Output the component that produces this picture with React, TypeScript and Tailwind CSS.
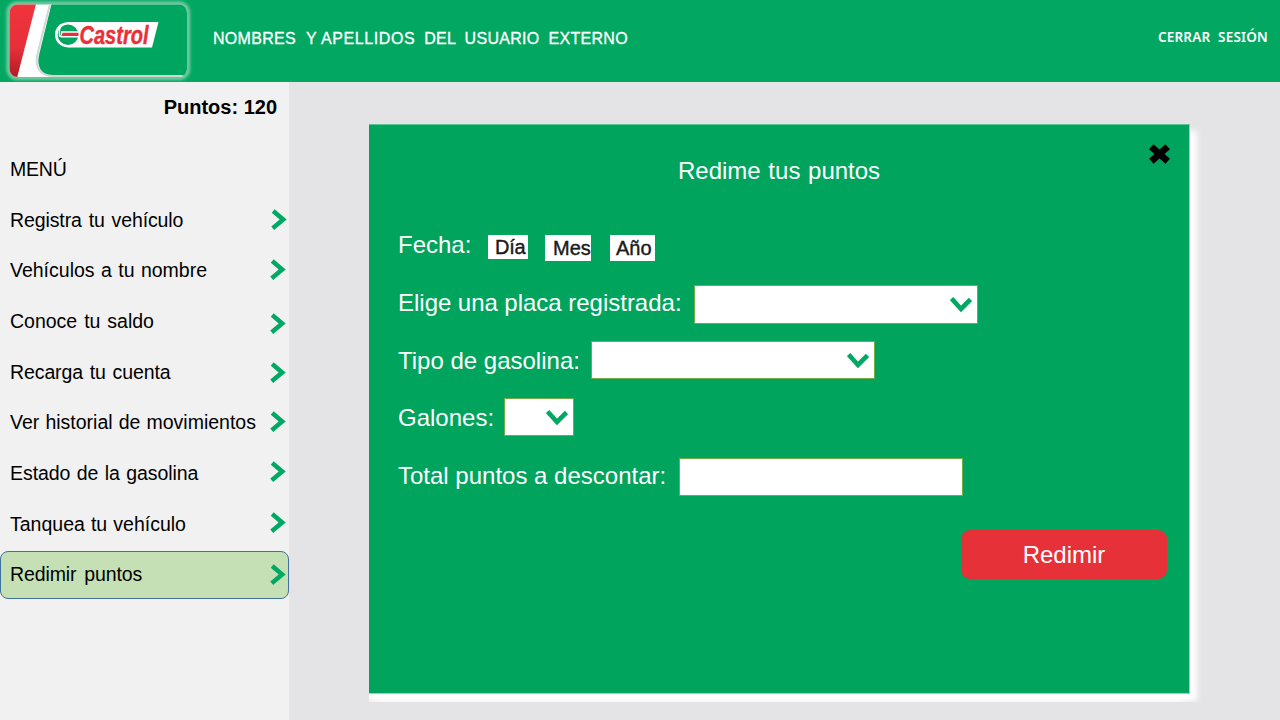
import React from "react";

type MenuItem = { label: string; spacing: string; arrow: string; active?: boolean };

const menu: MenuItem[] = [
  { label: "Registra tu vehículo", spacing: "[word-spacing:1.5px] tracking-[-0.1px]", arrow: "mt-[14px] mr-[2px]" },
  { label: "Vehículos a tu nombre", spacing: "[word-spacing:1px] -mt-px", arrow: "mt-[13px] mr-[3px]" },
  { label: "Conoce tu saldo", spacing: "[word-spacing:1.5px]", arrow: "mt-[17px] mr-[3px]" },
  { label: "Recarga tu cuenta", spacing: "[word-spacing:1.4px] tracking-[-0.1px]", arrow: "mt-[15px] mr-[3px]" },
  { label: "Ver historial de movimientos", spacing: "[word-spacing:0.7px]", arrow: "mt-[14px] mr-[3px]" },
  { label: "Estado de la gasolina", spacing: "[word-spacing:1px] tracking-[-0.05px]", arrow: "mt-[13px] mr-[3px]" },
  { label: "Tanquea tu vehículo", spacing: "[word-spacing:0.7px]", arrow: "mt-[13px] mr-[3px]" },
  { label: "Redimir puntos", spacing: "[word-spacing:2.500px] tracking-[-0.1px]", arrow: "", active: true },
];

function Logo() {
  return (
    <svg width="200" height="82" viewBox="0 0 200 82" className="block shrink-0">
      <defs>
        <linearGradient id="red" x1="0" y1="0" x2="0" y2="1">
          <stop offset="0" stopColor="#f0343c" />
          <stop offset="0.6" stopColor="#e6303a" />
          <stop offset="1" stopColor="#b01a22" />
        </linearGradient>
        <clipPath id="card">
          <rect x="9.500" y="4.500" width="177.500" height="72.500" rx="8" />
        </clipPath>
        <filter id="glow" x="-10%" y="-20%" width="120%" height="140%">
          <feGaussianBlur stdDeviation="1.8" />
        </filter>
      </defs>
      <rect x="8.500" y="3.500" width="179.500" height="74.500" rx="9" fill="none" stroke="#b4dcc8" strokeWidth="4" opacity="0.7" filter="url(#glow)" />
      <g clipPath="url(#card)">
        <rect x="9" y="4" width="179" height="74" fill="#fff" />
        <path d="M9 4H36L17 78H9Z" fill="url(#red)" />
        <path d="M51.500 4L39 55C36.500 66 41 75.500 53 75.500H188V4Z" fill="#00a65f" />
        <path d="M50 4L37.500 54C34.500 67 40 76 53 76H182" fill="none" stroke="#d3d6d5" strokeWidth="2" />
      </g>
      <path d="M67.500 22H158.500L152 47.500H67.500Z" fill="#fff" />
      <circle cx="67.500" cy="34.700" r="12.500" fill="#fff" />
      <circle cx="68" cy="34.700" r="10.300" fill="#00a65f" />
      <path d="M61.500 25.500Q58.500 30 59.500 36H65" fill="none" stroke="#fff" strokeWidth="1.300" />
      <path d="M61 31.300H79V37.500H60.500Z" fill="#fff" />
      <path d="M62.500 32.700H78.500V36H61.500Z" fill="#e6303a" />
      <text x="79.500" y="43.500" fontSize="25" fontWeight="700" fontStyle="italic" textLength="69" lengthAdjust="spacingAndGlyphs" fill="#ea2f39" stroke="#ea2f39" strokeWidth="0.400" className="font-['Liberation_Sans_Narrow','Liberation_Sans',sans-serif]">
        Castrol
      </text>
    </svg>
  );
}

function ArrowRight({ className }: { className: string }) {
  return (
    <svg width="16" height="21" viewBox="0 0 16 21" className={`block shrink-0 ${className}`}>
      <path d="M2.200 2L12.200 10.500L1.700 19.200" fill="none" stroke="#00a963" strokeWidth="4.500" />
    </svg>
  );
}

function Field({ className, arrow }: { className: string; arrow?: boolean }) {
  return (
    <div className={`flex justify-end border border-[#70ad47] bg-white ${className}`}>
      {arrow && (
        <svg width="22" height="16" viewBox="0 0 22 16" className="mt-[11px] mr-[5px] block">
          <path d="M1.600 1.500L11 12L20.500 2.500" fill="none" stroke="#00a963" strokeWidth="4.600" />
        </svg>
      )}
    </div>
  );
}

export default function App() {
  return (
    <div className="flex h-[720px] w-[1280px] flex-col overflow-hidden bg-[#e4e4e6] font-['Liberation_Sans',Arial,sans-serif]">
      <header className="flex h-[82px] shrink-0 bg-[#02a861] text-white">
        <Logo />
        <h1 className="mt-[29px] ml-[13px] flex-1 text-[16px] leading-[20px] tracking-[0.3px] whitespace-nowrap [word-spacing:4.2px] [-webkit-text-stroke:0.3px_#ffffff]">
          NOMBRES <span className="mr-[-5px] ml-px">Y</span> <span className="tracking-[0.6px]">APELLIDOS</span> DEL USUARIO EXTERNO
        </h1>
        <a className="mt-[27px] mr-[12px] font-['Noto_Sans',sans-serif] text-[13.5px] leading-[20px] font-semibold tracking-[0.2px] whitespace-nowrap [word-spacing:4px]">
          CERRAR SESIÓN
        </a>
      </header>

      <div className="flex min-h-0 flex-1">
        <aside className="flex w-[289px] shrink-0 flex-col bg-[#f1f1f1] text-[19.5px] text-black">
          <p className="mt-[13px] mr-[12px] text-right text-[20px] leading-[24px] font-bold">Puntos: 120</p>
          <h2 className="mt-[38px] ml-[10px] leading-[24px] tracking-[-0.2px]">MENÚ</h2>
          <nav className="mt-[14px] flex flex-col">
            {menu.map((m) => (
              <div
                key={m.label}
                className={
                  m.active
                    ? "mt-[2px] flex h-[48px] items-start justify-between rounded-[8px] border border-[#41719c] bg-[#c5e0b4]"
                    : "flex h-[50.6px] items-start justify-between"
                }
              >
                <span className={`leading-[24px] whitespace-nowrap ${m.active ? "mt-[10px] ml-[9px]" : "mt-[13px] ml-[10px]"}`}>
                  <span className={`block ${m.spacing}`}>{m.label}</span>
                </span>
                <ArrowRight className={m.active ? "mt-[12px] mr-[2px]" : m.arrow} />
              </div>
            ))}
          </nav>
        </aside>

        <main className="flex-1 pt-[42px] pl-[80px]">
          <section className="flex h-[570px] w-[821px] flex-col border-t border-r border-b border-t-[#5cc596] border-r-[#8fd8b6] border-b-[#8fd8b6] bg-[#00a45d] text-[24px] leading-[38px] text-white shadow-[7px_7px_6px_0px_#ffffff,-6px_7px_6px_0px_#ffffff] [clip-path:inset(0_-20px_-8px_0)]">
            <div className="flex h-[101px] shrink-0">
              <h2 className="mt-[27px] ml-[309px] flex-1 whitespace-nowrap [word-spacing:1px]">Redime tus puntos</h2>
              <button className="mt-[18px] mr-[17px] h-[22px] w-[24px]" aria-label="Cerrar">
                <svg width="24" height="22" viewBox="0 0 24 22">
                  <path d="M3.300 3.700L19.700 18.300M19.700 3.700L3.300 18.300" fill="none" stroke="#000" strokeWidth="6.800" />
                </svg>
              </button>
            </div>

            <div className="flex h-[58px] items-start pl-[29px] whitespace-nowrap">
              <span className="w-[90px]">Fecha:</span>
              <div className="mt-[9px] h-[24px] w-[40px] overflow-hidden bg-white pl-[7px] text-[20px] leading-[25px] tracking-[-0.300px] text-[#1a1a1a] [-webkit-text-stroke:0.400px_#1a1a1a]">Día</div>
              <div className="mt-[9px] ml-[17px] h-[26px] w-[46px] overflow-hidden bg-white pl-[8px] text-[20px] leading-[27px] text-[#1a1a1a] [-webkit-text-stroke:0.400px_#1a1a1a]">Mes</div>
              <div className="mt-[9px] ml-[19px] h-[26px] w-[45px] overflow-hidden bg-white pl-[6px] text-[20px] leading-[27px] text-[#1a1a1a] [-webkit-text-stroke:0.400px_#1a1a1a]">Año</div>
            </div>
            <div className="flex h-[58px] items-start pl-[29px] whitespace-nowrap">
              <span className="w-[296px] [word-spacing:-0.200px]">Elige una placa registrada:</span>
              <Field className="mt-px h-[39px] w-[284px]" arrow />
            </div>
            <div className="flex h-[57px] items-start pl-[29px] whitespace-nowrap">
              <span className="w-[193px]">Tipo de gasolina:</span>
              <Field className="-mt-px h-[38px] w-[284px]" arrow />
            </div>
            <div className="flex h-[58px] items-start pl-[29px] whitespace-nowrap">
              <span className="w-[106px]">Galones:</span>
              <Field className="-mt-px h-[38px] w-[70px]" arrow />
            </div>
            <div className="flex h-[73px] items-start pl-[29px] whitespace-nowrap">
              <span className="w-[281px]">Total puntos a descontar:</span>
              <Field className="mt-px h-[38px] w-[284px]" />
            </div>
            <button className="mr-[22px] h-[49px] w-[206px] shrink-0 self-end rounded-[9px] bg-[#e63138] leading-[49px]">
              Redimir
            </button>
          </section>
        </main>
      </div>
    </div>
  );
}
